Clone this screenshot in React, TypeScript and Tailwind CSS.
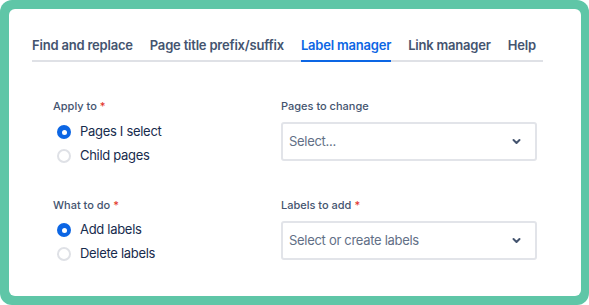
const tabs = ["Find and replace", "Page title prefix/suffix", "Label manager", "Link manager", "Help"];

function Radio({ checked, label }: { checked?: boolean; label: string }) {
  return (
    <label className="flex h-6 items-center gap-[9px] pl-1 text-[13px] tracking-[-0.3px] text-[#172b4d]">
      {checked ? (
        <span className="flex h-[14px] w-[14px] items-center justify-center rounded-full bg-[#0c66e4]">
          <span className="h-[5px] w-[5px] rounded-full bg-white" />
        </span>
      ) : (
        <span className="h-[14px] w-[14px] rounded-full border-2 border-[#dfe1e6] bg-white" />
      )}
      {label}
    </label>
  );
}

function FieldLabel({ text, required }: { text: string; required?: boolean }) {
  return (
    <div className="h-4 text-[11px] leading-4 font-medium text-[#44546f]">
      {text}
      {required && <span className="ml-[3px] text-[#e2342a]">*</span>}
    </div>
  );
}

function Select({ placeholder }: { placeholder: string }) {
  return (
    <div className="mt-2 flex h-[39px] w-[256px] items-center justify-between rounded-[3px] border-2 border-[#e2e4e9] bg-white pl-[6px] pr-[14px]">
      <span className="text-[13px] tracking-[-0.3px] text-[#626f86]">{placeholder}</span>
      <svg width="9" height="7" viewBox="0 0 9 7" fill="none">
        <path d="M1.5 2 L4.5 5 L7.5 2" stroke="#44546f" strokeWidth="2" strokeLinecap="round" strokeLinejoin="round" />
      </svg>
    </div>
  );
}

export default function App() {
  return (
    <div className="h-[305px] w-[589px] bg-white font-['Inter',sans-serif]">
      <div className="h-full w-full rounded-[12px] bg-[#5fc6a7] pb-[9px] pl-[9px] pr-[8px] pt-[9px]">
        <div className="h-full w-full rounded-[6px] bg-white px-[23px] pt-[26px]">
          <div className="flex w-[511px] gap-[17px] border-b-2 border-[#dfe1e6]">
            {tabs.map((t) => (
              <div
                key={t}
                className={
                  t === "Label manager"
                    ? "-mb-[2px] shrink-0 whitespace-nowrap border-b-2 border-[#0c66e4] pb-[5px] text-[13px] leading-5 font-semibold tracking-[-0.2px] text-[#0c66e4]"
                    : "shrink-0 whitespace-nowrap pb-[5px] text-[13px] leading-5 font-semibold tracking-[-0.2px] text-[#44546f]"
                }
              >
                {t}
              </div>
            ))}
          </div>

          <div className="mt-9 grid grid-cols-[228px_256px] gap-y-[29px] pl-[21px]">
            <div>
              <FieldLabel text="Apply to" required />
              <div className="mt-[6px]">
                <Radio checked label="Pages I select" />
                <Radio label="Child pages" />
              </div>
            </div>
            <div>
              <FieldLabel text="Pages to change" />
              <Select placeholder="Select..." />
            </div>
            <div>
              <FieldLabel text="What to do" required />
              <div className="mt-[5px]">
                <Radio checked label="Add labels" />
                <Radio label="Delete labels" />
              </div>
            </div>
            <div>
              <FieldLabel text="Labels to add" required />
              <Select placeholder="Select or create labels" />
            </div>
          </div>
        </div>
      </div>
    </div>
  );
}
